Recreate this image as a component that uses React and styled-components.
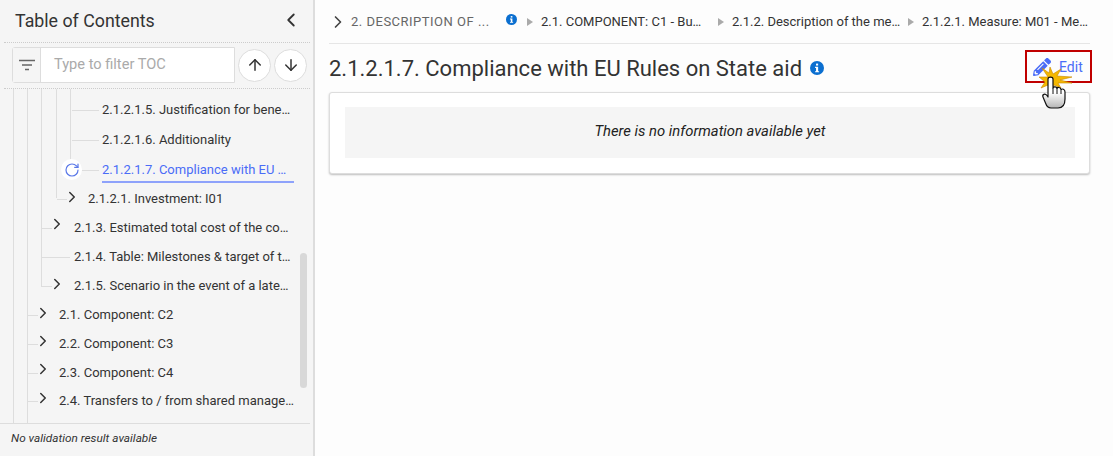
import React from "react";
import styled, { createGlobalStyle } from "styled-components";
import { ArrowUp, ArrowDown, ChevronLeft, ChevronRight, RotateCw } from "lucide-react";
import { FaPencilAlt } from "react-icons/fa";

const Global = createGlobalStyle`
  html, body { margin: 0; padding: 0; background: #fdfdfd; }
  body { font-family: Roboto, "Liberation Sans", Arial, sans-serif; color: #333; overflow: hidden; }
  * { box-sizing: border-box; }
`;
const Page = styled.div`display: flex; width: 1113px; height: 456px; overflow: hidden;`;
const Side = styled.aside`width: 315px; flex: none; height: 456px; background: #f5f5f5; border-right: 2px solid #ddd; display: flex; flex-direction: column; padding-right: 3px;`;
const SideHead = styled.div`height: 43px; margin-left: 4px; padding: 0 8px 2px 11px; display: flex; align-items: center; justify-content: space-between; border-bottom: 1px dotted #ccc; font-size: 17.8px; color: #333;`;
const FilterRow = styled.div`height: 46px; margin-left: 4px; padding: 0 0 1px 8px; display: flex; align-items: center; border-bottom: 1px dotted #ccc;`;
const FilterBox = styled.div`width: 223px; height: 36px; flex: none; display: flex; border: 1px solid #ddd; border-radius: 3px 0 0 3px; background: #fff; margin-right: 3px;`;
const FilterIcon = styled.div`width: 28px; flex: none; background: #f5f5f5; border-right: 1px solid #ddd; display: flex; align-items: center; justify-content: center;`;
const FilterText = styled.div`padding-left: 13px; line-height: 32px; font-size: 14.6px; color: #aaa; white-space: nowrap;`;
const RoundBtn = styled.div`width: 33px; height: 33px; flex: none; margin-right: 3px; border-radius: 50%; background: #fff; border: 1px solid #ddd; display: flex; align-items: center; justify-content: center; color: #333;`;
const Tree = styled.div`flex: 1; position: relative; overflow: hidden; padding-top: 6px;`;
const Guide = styled.span`position: absolute; top: 0; bottom: ${p => p.$end}px; left: ${p => p.$x}px; width: 1px; background: #ddd;`;
const Row = styled.div`height: ${p => p.$h || 29}px; display: flex; align-items: center; padding-left: ${p => p.$x}px; font-size: 13px; color: ${p => (p.$active ? "#4a6cf7" : "#333")}; position: relative;`;
const Label = styled.div`
  width: ${p => p.$w}px; white-space: nowrap; line-height: 16px; position: relative;
  ${p => p.$active && `&::after { content: ""; position: absolute; left: 0; right: 0; bottom: -5px; height: 2px; background: #8ea2fb; }`}
`;
const Branch = styled.span`position: absolute; left: ${p => p.$x}px; top: 50%; width: ${p => p.$w}px; height: 1px; background: #ddd;`;
const Chevron = styled(ChevronRight)`position: absolute; left: ${p => p.$x}px; top: ${p => p.$y}px; color: #333;`;
const Reload = styled.span`position: absolute; left: 61px; top: 4px; width: 21px; height: 21px; border-radius: 50%; background: #fff; display: flex; align-items: center; justify-content: center; color: #5a78e8;`;
const Thumb = styled.div`position: absolute; left: 300px; top: 164px; width: 7px; height: 135px; border-radius: 4px; background: #d8d8d8;`;
const SideFoot = styled.div`height: 33px; border-top: 1px solid #ddd; padding: 7px 0 0 11px; font-size: 11.8px; font-style: italic; color: #333; white-space: nowrap;`;
const Main = styled.main`flex: 1; padding: 0 23px 0 14px; position: relative;`;
const Crumbs = styled.div`height: 44px; border-bottom: 1px solid #e6e6e6; display: flex; align-items: center; font-size: 13px; color: #333; padding-bottom: 1px;`;
const CrumbChevron = styled(ChevronRight)`margin: 2px 3px 0 -1px; color: #444; flex: none;`;
const Crumb = styled.span`width: ${p => p.$w}px; white-space: nowrap; flex: none; ${p => p.$muted && "color: #666; letter-spacing: .5px;"}`;
const Tri = styled.span`flex: none; width: 0; height: 0; margin: 2px 8px 0 ${p => p.$l}px; border-left: 6px solid #aaa; border-top: 4.500px solid transparent; border-bottom: 4.500px solid transparent;`;
const InfoSvg = styled.svg`flex: none; ${p => p.$crumb && "margin: 0 0 3px 9px;"}`;
const Info = ({ size, crumb }) => (
  <InfoSvg $crumb={crumb} width={size} height={size} viewBox="0 0 16 16">
    <circle cx="8" cy="8" r="8" fill="#0b6fd0" />
    <rect x="6.900" y="3" width="2.400" height="2.200" fill="#fff" />
    <path d="M5.800 6.600h3.500v5h1.100v1.300H5.800v-1.300h1.100V7.900H5.800z" fill="#fff" />
  </InfoSvg>
);
const TitleRow = styled.div`height: 48px; display: flex; align-items: center; justify-content: space-between;`;
const Title = styled.h1`margin: 0; font-size: 22px; font-weight: 400; color: #333; display: flex; align-items: center; gap: 8px; white-space: nowrap;`;
const EditBtn = styled.div`width: 67px; height: 33px; margin: 6px -2px 0 0; align-self: flex-start; border: 2px solid #c00000; display: flex; align-items: center; padding-left: 6px; gap: 8px; color: #4a6cf7; font-size: 14px; position: relative;`;
const Cursor = styled.svg`position: absolute; left: 11px; top: 14px; pointer-events: none;`;
const Card = styled.section`height: 82px; background: #fff; border-radius: 3px; border: 1px solid #ddd; box-shadow: 0 1px 2px rgba(0,0,0,.25); padding: 14px 14px 14px 15px;`;
const Empty = styled.div`height: 51px; background: #f5f5f5; padding-bottom: 3px; display: flex; align-items: center; justify-content: center; font-size: 14.8px; font-style: italic; color: #222;`;

const rows = [
  { x: 102, w: 192, t: "2.1.2.1.5. Justification for bene…", b: [72, 27], h: 30 },
  { x: 102, w: 192, t: "2.1.2.1.6. Additionality", b: [72, 27], h: 30 },
  { x: 102, w: 192, t: "2.1.2.1.7. Compliance with EU …", b: [82, 17], active: true, reload: true },
  { x: 88, w: 192, t: "2.1.2.1. Investment: I01", b: [57, 10], c: 63, y: 4 },
  { x: 74, w: 220, t: "2.1.3. Estimated total cost of the co…", b: [42, 10], c: 48, y: 2 },
  { x: 74, w: 220, t: "2.1.4. Table: Milestones & target of t…", b: [42, 28] },
  { x: 74, w: 220, t: "2.1.5. Scenario in the event of a late…", b: [42, 10], c: 48, y: 4 },
  { x: 59, w: 236, t: "2.1. Component: C2", b: [28, 10], c: 34, y: 4 },
  { x: 59, w: 236, t: "2.2. Component: C3", b: [28, 10], c: 34, y: 3 },
  { x: 59, w: 236, t: "2.3. Component: C4", b: [28, 10], c: 34, y: 2 },
  { x: 59, w: 237, t: "2.4. Transfers to / from shared manage…", b: [28, 10], c: 34, y: 2, h: 28 },
];

export default function App() {
  return (
    <Page>
      <Global />
      <Side>
        <SideHead>
          <span>Table of Contents</span>
          <ChevronLeft size={22} strokeWidth={2} />
        </SideHead>
        <FilterRow>
          <FilterBox>
            <FilterIcon>
              <svg width="18" height="12" viewBox="0 0 18 12"><path d="M1 1.500h16M4 6h10M7 10.500h4" stroke="#666" strokeWidth="1.500" /></svg>
            </FilterIcon>
            <FilterText>Type to filter TOC</FilterText>
          </FilterBox>
          <RoundBtn><ArrowUp size={18} strokeWidth={2} /></RoundBtn>
          <RoundBtn><ArrowDown size={18} strokeWidth={2} /></RoundBtn>
        </FilterRow>
        <Tree>
          <Guide $x={13} $end={0} /><Guide $x={27} $end={0} />
          <Guide $x={41} $end={136} /><Guide $x={56} $end={225} />
          <Guide $x={70} $end={264} />
          {rows.map(r => (
            <Row key={r.t} $x={r.x} $h={r.h} $active={r.active}>
              <Branch $x={r.b[0]} $w={r.b[1]} />
              {r.reload && <Reload><RotateCw size={16} strokeWidth={1.800} /></Reload>}
              {r.c && <Chevron $x={r.c} $y={r.y} size={18} strokeWidth={2} />}
              <Label $w={r.w} $active={r.active}>{r.t}</Label>
            </Row>
          ))}
          <Thumb />
        </Tree>
        <SideFoot>No validation result available</SideFoot>
      </Side>
      <Main>
        <Crumbs>
          <CrumbChevron size={20} strokeWidth={2} />
          <Crumb $muted $w={146}>2. DESCRIPTION OF ...</Crumb>
          <Info size={11} crumb />
          <Tri $l={10} />
          <Crumb $w={168}>2.1. COMPONENT: C1 - Bu…</Crumb>
          <Tri $l={9} />
          <Crumb $w={167}>2.1.2. Description of the me…</Crumb>
          <Tri $l={9} />
          <Crumb $w={168}>2.1.2.1. Measure: M01 - Me…</Crumb>
        </Crumbs>
        <TitleRow>
          <Title>2.1.2.1.7. Compliance with EU Rules on State aid <Info size={14} /></Title>
          <EditBtn>
            <FaPencilAlt size={18} />
            <span>Edit</span>
            <Cursor width="36" height="44" viewBox="0 0 36 44">
              <defs>
                <linearGradient id="handFill" x1="0" y1="0" x2="0" y2="1">
                  <stop offset="0.500" stopColor="#fff" />
                  <stop offset="1" stopColor="#b5b5b5" />
                </linearGradient>
              </defs>
              <path d="M12 1l3 7 8-5-4 7 15 1-12 3 12 3-14 0 3 5-7-3-3 7-3-7-7 3 4-6L1 11l9 0L4 2l7 5z" fill="#f5b800" stroke="#c68600" strokeWidth=".6" />
              <path d="M10 13C10 10.500 15 10.500 15 13V22C15.500 20.500 18.500 20.500 19 22.500C19.500 21 22.500 21 23 23.500C24 22.500 27 23 27 26V33C27 38 25 42 20 42H13C10 42 8.500 40 7.500 37L5 31C4 28.500 7 27 9 29.500L10 31Z" fill="url(#handFill)" stroke="#111" strokeWidth="1.200" strokeLinejoin="round" />
              <path d="M15 22V28M19 22.500V28M23 23.500V28" stroke="#111" strokeWidth="1" fill="none" />
            </Cursor>
          </EditBtn>
        </TitleRow>
        <Card>
          <Empty>There is no information available yet</Empty>
        </Card>
      </Main>
    </Page>
  );
}
